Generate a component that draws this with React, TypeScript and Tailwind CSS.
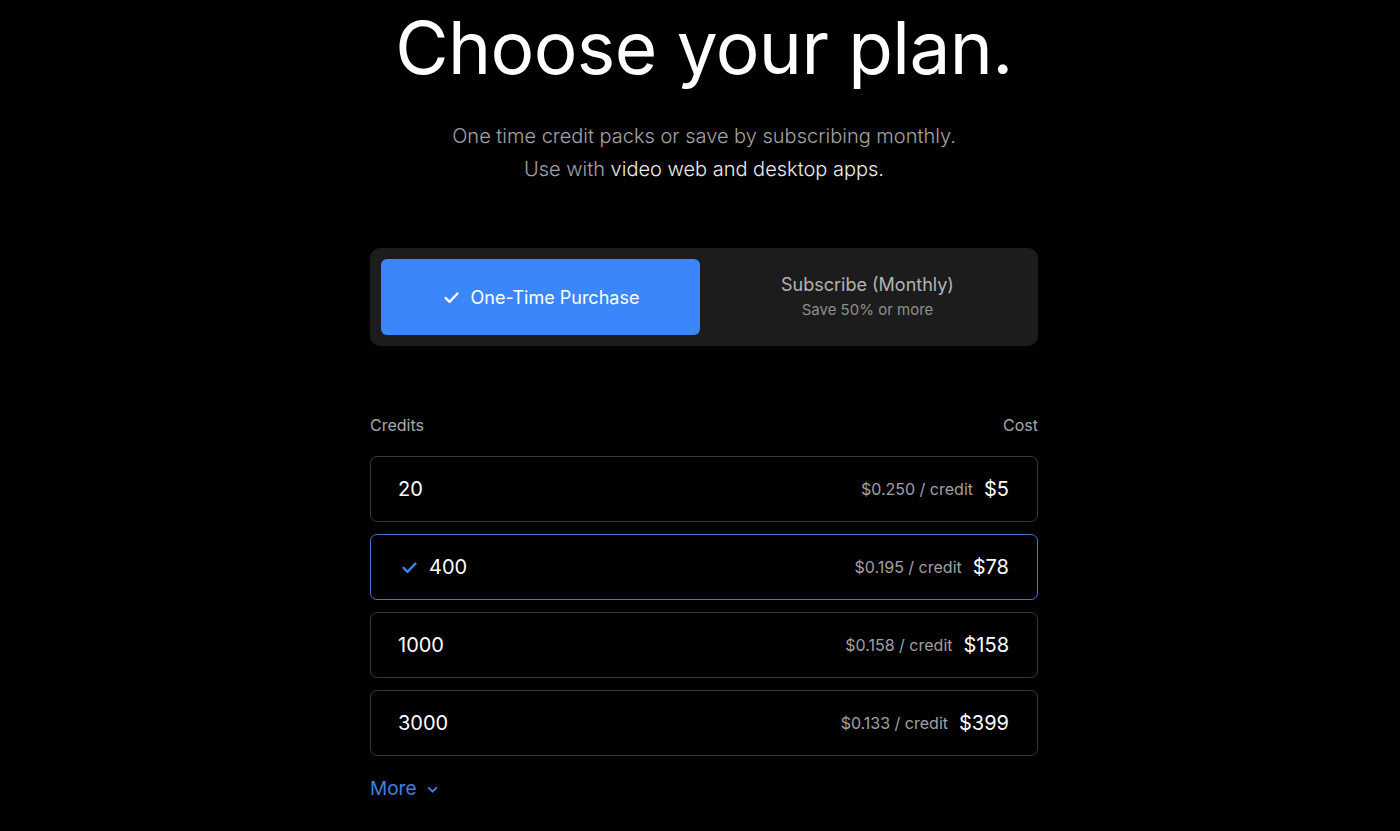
import React, { useState } from "react";

const packs = [
  { credits: "20", rate: "$0.250 / credit", cost: "$5" },
  { credits: "400", rate: "$0.195 / credit", cost: "$78" },
  { credits: "1000", rate: "$0.158 / credit", cost: "$158" },
  { credits: "3000", rate: "$0.133 / credit", cost: "$399" },
];

const Check = ({ className }: { className?: string }) => (
  <svg viewBox="0 0 24 24" fill="none" stroke="currentColor" strokeWidth={3} strokeLinecap="round" strokeLinejoin="round" className={className}>
    <path d="M4.5 12.5l5 5L19.5 7" />
  </svg>
);

const App = () => {
  // 선택된 크레딧
  const [selected, setSelected] = useState("400");
  const [mode, setMode] = useState("once");

  return (
    <div className="min-h-[831px] bg-black text-white font-['Inter',sans-serif] flex flex-col items-center overflow-hidden pl-[8px]">
      <h1 className="mt-[6px] text-[73px] leading-[84px] font-normal tracking-[-0.6px] text-white">
        Choose your plan.
      </h1>
      <div className="mt-[30px] text-center text-[20px] leading-[33px] text-[#a3a3a3] font-light">
        <p>One time credit packs or save by subscribing monthly.</p>
        <p>
          Use with <span className="text-[#ececec]">video web and desktop apps.</span>
        </p>
      </div>

      <div className="w-[668px] mt-[62px]">
        <div className="grid grid-cols-2 gap-[8px] p-[11px] rounded-[10px] bg-[#1c1c1c] h-[98px]">
          <button
            onClick={() => setMode("once")}
            className={`rounded-[6px] flex items-center justify-center gap-[10px] text-[18px] ${
              mode === "once" ? "bg-[#3b86fb] text-white" : "text-[#b3b3b3]"
            }`}
          >
            {mode === "once" && <Check className="w-[19px] h-[19px]" />}
            One-Time Purchase
          </button>
          <button
            onClick={() => setMode("sub")}
            className={`rounded-[6px] flex flex-col items-center justify-center ${
              mode === "sub" ? "bg-[#3b86fb] text-white" : "text-[#b3b3b3]"
            }`}
          >
            <span className="text-[18px] leading-[24px]">Subscribe (Monthly)</span>
            <span className="text-[15px] leading-[22px] mt-[2px] text-[#8f8f8f]">Save 50% or more</span>
          </button>
        </div>

        <div className="mt-[67px] flex justify-between text-[16px] text-[#a8a8a8]">
          <span>Credits</span>
          <span>Cost</span>
        </div>

        <div className="mt-[19px] flex flex-col gap-[12px]">
          {packs.map((p) => {
            const on = p.credits === selected;
            return (
              <div
                key={p.credits}
                onClick={() => setSelected(p.credits)}
                className={`h-[66px] rounded-[7px] border flex items-center justify-between pl-[27px] pr-[28px] cursor-pointer ${
                  on ? "border-[#4c72d6]" : "border-[#3a3a3a]"
                }`}
              >
                <div className="flex items-center gap-[10px] text-[20px] text-white">
                  {on && <Check className="w-[19px] h-[19px] text-[#3b82f6] ml-[2px]" />}
                  {p.credits}
                </div>
                <div className="flex items-center gap-[11px]">
                  <span className="text-[16px] text-[#a0a0a0]">{p.rate}</span>
                  <span className="text-[20px] text-white">{p.cost}</span>
                </div>
              </div>
            );
          })}
        </div>

        <button className="mt-[19px] flex items-center gap-[10px] text-[19px] text-[#3f7fe3]">
          More
          <svg viewBox="0 0 24 24" fill="none" stroke="currentColor" strokeWidth={3.5} strokeLinecap="round" strokeLinejoin="round" className="w-[13px] h-[13px]">
            <path d="M5 9l7 7 7-7" />
          </svg>
        </button>
      </div>
    </div>
  );
};

export default App;
